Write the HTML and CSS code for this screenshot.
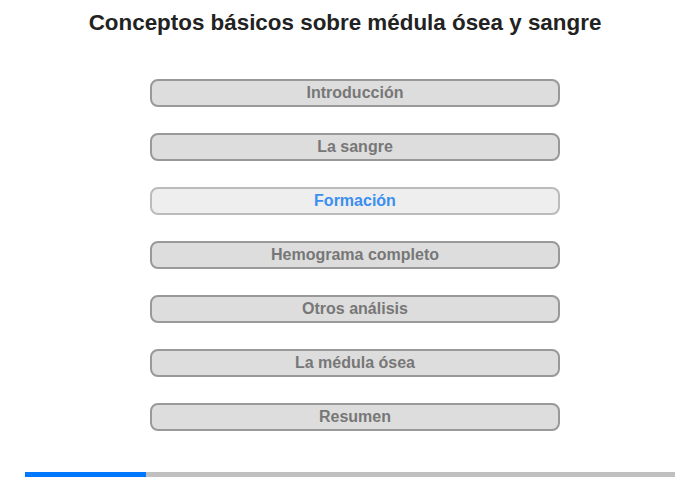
FILE: index.html
```html
<!DOCTYPE html>
<html lang="es">
<head>
  <meta charset="UTF-8">
  <title>Conceptos básicos sobre médula ósea y sangre</title>
  <link rel="stylesheet" href="styles.css">
</head>
<body>
  <h1 class="title">Conceptos básicos sobre médula ósea y sangre</h1>

  <nav class="menu">
    <button class="menu__item">Introducción</button>
    <button class="menu__item">La sangre</button>
    <button class="menu__item menu__item--active">Formación</button>
    <button class="menu__item">Hemograma completo</button>
    <button class="menu__item">Otros análisis</button>
    <button class="menu__item">La médula ósea</button>
    <button class="menu__item">Resumen</button>
  </nav>

  <div class="progress">
    <div class="progress__bar" style="width: 18.6%;"></div>
  </div>
</body>
</html>
```

FILE: styles.css
```css
body {
  margin: 0;
  font-family: "Liberation Sans", Arial, sans-serif;
  background: #fff;
  width: 700px;
  height: 480px;
}
.title {
  margin: 0;
  padding-top: 10px;
  padding-right: 10px;
  font-size: 22.4px;
  line-height: 26px;
  font-weight: bold;
  color: #222;
  text-align: center;
}
.menu {
  display: flex;
  flex-direction: column;
  gap: 26px;
  width: 410px;
  margin: 43px 0 0 150px;
}
.menu__item {
  box-sizing: border-box;
  height: 28px;
  padding: 0;
  border: 2px solid #999;
  border-radius: 8px;
  background: #ddd;
  color: #777;
  font-family: inherit;
  font-size: 16px;
  font-weight: bold;
  text-align: center;
  cursor: pointer;
}
.menu__item--active {
  background: #eee;
  border-color: #bbb;
  color: #3a8ff0;
}
.progress {
  margin: 41px 25px 0;
  height: 5px;
  background: #c0c0c0;
}
.progress__bar {
  height: 100%;
  background: #0077ff;
}
```
